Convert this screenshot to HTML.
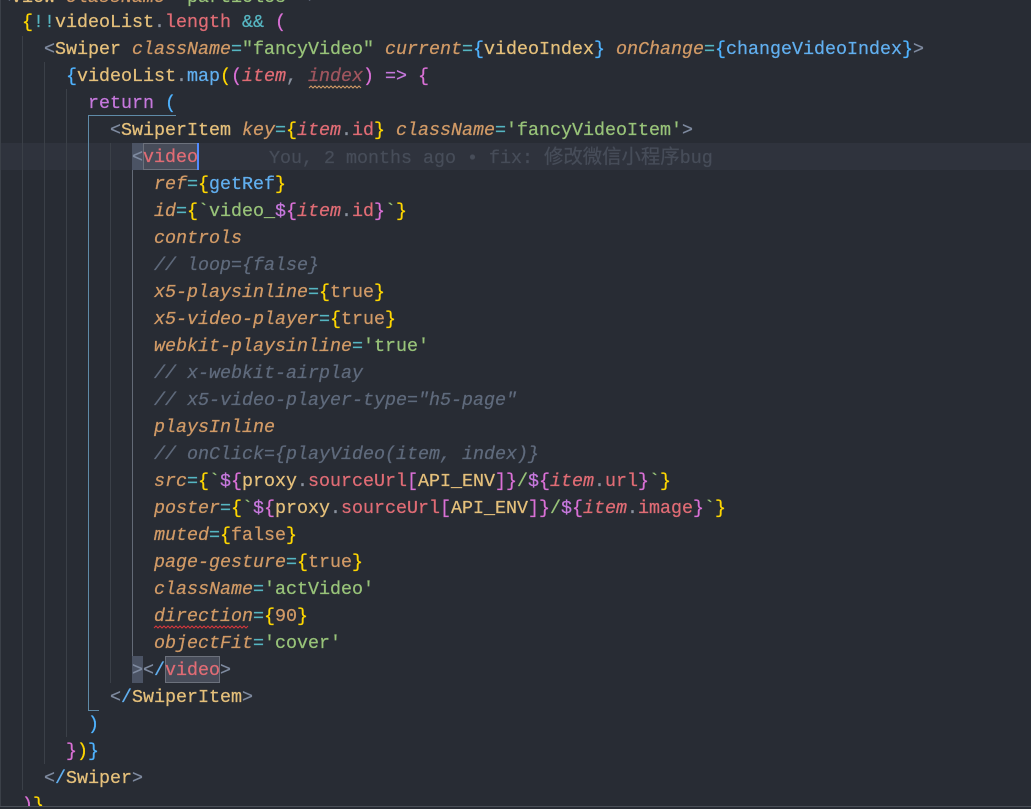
<!DOCTYPE html>
<html><head><meta charset="utf-8"><style>
html,body{margin:0;padding:0;background:#282c34;width:1031px;height:809px;overflow:hidden}
#e{position:relative;width:1031px;height:809px;overflow:hidden;background:#282c34;font-family:"Liberation Mono","Noto Sans CJK SC",monospace;font-size:18.33px;color:#abb2bf}
.l{position:absolute;left:0;height:27px;line-height:27px;white-space:pre;transform:translateY(1px);-webkit-text-stroke:.25px currentColor}
.b{position:absolute}
.a{color:#d19a66;font-style:italic}.t{color:#e5c07b}.g{color:#7f8ba0}.s{color:#98c379}.c{color:#5f6a7c;font-style:italic}
.r{color:#e06c75}.ri{color:#e06c75;font-style:italic}.u{color:#56b6c2}.p{color:#c678dd}.f{color:#61afef}.n{color:#d19a66}
.y{color:#ffd700}.k{color:#da70d6}.q{color:#4fb3ff}.d{color:#8a929f}.sl{color:#61afef}
</style></head><body><div id="e">
<div class="b" style="left:0;top:143px;width:1031px;height:27px;background:#2f333d"></div>
<div class="b" style="left:0;top:0;width:1px;height:806px;background:#3b4048"></div>
<div class="b" style="left:22px;top:36px;width:1px;height:754px;background:#3b4048"></div>
<div class="b" style="left:44px;top:62px;width:1px;height:702px;background:#3b4048"></div>
<div class="b" style="left:66px;top:89px;width:1px;height:648px;background:#3b4048"></div>
<div class="b" style="left:88px;top:115px;width:1px;height:595px;background:#5f8ba8"></div>
<div class="b" style="left:88px;top:115px;width:88px;height:1px;background:#5f8ba8"></div>
<div class="b" style="left:88px;top:710px;width:11px;height:1px;background:#5f8ba8"></div>
<div class="b" style="left:110px;top:143px;width:1px;height:540px;background:#3b4048"></div>
<div class="b" style="left:132px;top:170px;width:1px;height:486px;background:#636a76"></div>
<div class="b" style="left:132px;top:143px;width:11px;height:27px;background:#4b5364"></div>
<div class="b" style="left:143px;top:143px;width:53px;height:25px;background:#474c59;border:1px solid #6c717c"></div>
<div class="b" style="left:197px;top:143px;width:2px;height:27px;background:#528bff"></div>
<div class="b" style="left:132px;top:656px;width:11px;height:27px;background:#4b5364"></div>
<div class="b" style="left:165px;top:656px;width:53px;height:25px;background:#474c59;border:1px solid #6c717c"></div>
<div class="l" style="top:-17px"><span class="g">&lt;</span><span class="t">View</span> <span class="a">className</span><span class="u">=</span><span class="s">"particles"</span> <span class="g">&gt;</span></div>
<div class="l" style="top:8px">  <span class="y">{</span><span class="u">!!</span><span class="t">videoList</span><span class="d">.</span><span class="r">length</span> <span class="u">&amp;&amp;</span> <span class="k">(</span></div>
<div class="l" style="top:35px">    <span class="g">&lt;</span><span class="t">Swiper</span> <span class="a">className</span><span class="u">=</span><span class="s">"fancyVideo"</span> <span class="a">current</span><span class="u">=</span><span class="q">{</span><span class="t">videoIndex</span><span class="q">}</span> <span class="a">onChange</span><span class="u">=</span><span class="q">{</span><span class="f">changeVideoIndex</span><span class="q">}</span><span class="g">&gt;</span></div>
<div class="l" style="top:62px">      <span class="q">{</span><span class="t">videoList</span><span class="d">.</span><span class="f">map</span><span class="y">(</span><span class="k">(</span><span class="ri">item</span><span class="d">,</span> <span class="ri" style="opacity:.65">index</span><span class="k">)</span> <span class="p">=&gt;</span> <span class="k">{</span></div>
<div class="l" style="top:89px">        <span class="p">return</span> <span class="q">(</span></div>
<div class="l" style="top:116px">          <span class="g">&lt;</span><span class="t">SwiperItem</span> <span class="a">key</span><span class="u">=</span><span class="y">{</span><span class="ri">item</span><span class="d">.</span><span class="r">id</span><span class="y">}</span> <span class="a">className</span><span class="u">=</span><span class="s">'fancyVideoItem'</span><span class="g">&gt;</span></div>
<div class="l" style="top:143px">            <span class="g">&lt;</span><span class="r">video</span></div>
<div class="l" style="top:144px;left:269px;color:#474d59">You, 2 months ago • fix: <span style="font-size:19.4px">修改微信小程序</span>bug</div>
<div class="l" style="top:170px">              <span class="a">ref</span><span class="u">=</span><span class="y">{</span><span class="f">getRef</span><span class="y">}</span></div>
<div class="l" style="top:197px">              <span class="a">id</span><span class="u">=</span><span class="y">{</span><span class="s">`video_</span><span class="p">$</span><span class="k">{</span><span class="ri">item</span><span class="d">.</span><span class="r">id</span><span class="k">}</span><span class="s">`</span><span class="y">}</span></div>
<div class="l" style="top:224px">              <span class="a">controls</span></div>
<div class="l" style="top:251px">              <span class="c">// loop={false}</span></div>
<div class="l" style="top:278px">              <span class="a">x5-playsinline</span><span class="u">=</span><span class="y">{</span><span class="n">true</span><span class="y">}</span></div>
<div class="l" style="top:305px">              <span class="a">x5-video-player</span><span class="u">=</span><span class="y">{</span><span class="n">true</span><span class="y">}</span></div>
<div class="l" style="top:332px">              <span class="a">webkit-playsinline</span><span class="u">=</span><span class="s">'true'</span></div>
<div class="l" style="top:359px">              <span class="c">// x-webkit-airplay</span></div>
<div class="l" style="top:386px">              <span class="c">// x5-video-player-type="h5-page"</span></div>
<div class="l" style="top:413px">              <span class="a">playsInline</span></div>
<div class="l" style="top:440px">              <span class="c">// onClick={playVideo(item, index)}</span></div>
<div class="l" style="top:467px">              <span class="a">src</span><span class="u">=</span><span class="y">{</span><span class="s">`</span><span class="p">$</span><span class="k">{</span><span class="t">proxy</span><span class="d">.</span><span class="r">sourceUrl</span><span class="k">[</span><span class="t">API_ENV</span><span class="k">]</span><span class="k">}</span><span class="s">/</span><span class="p">$</span><span class="k">{</span><span class="ri">item</span><span class="d">.</span><span class="r">url</span><span class="k">}</span><span class="s">`</span><span class="y">}</span></div>
<div class="l" style="top:494px">              <span class="a">poster</span><span class="u">=</span><span class="y">{</span><span class="s">`</span><span class="p">$</span><span class="k">{</span><span class="t">proxy</span><span class="d">.</span><span class="r">sourceUrl</span><span class="k">[</span><span class="t">API_ENV</span><span class="k">]</span><span class="k">}</span><span class="s">/</span><span class="p">$</span><span class="k">{</span><span class="ri">item</span><span class="d">.</span><span class="r">image</span><span class="k">}</span><span class="s">`</span><span class="y">}</span></div>
<div class="l" style="top:521px">              <span class="a">muted</span><span class="u">=</span><span class="y">{</span><span class="n">false</span><span class="y">}</span></div>
<div class="l" style="top:548px">              <span class="a">page-gesture</span><span class="u">=</span><span class="y">{</span><span class="n">true</span><span class="y">}</span></div>
<div class="l" style="top:575px">              <span class="a">className</span><span class="u">=</span><span class="s">'actVideo'</span></div>
<div class="l" style="top:602px">              <span class="a">direction</span><span class="u">=</span><span class="y">{</span><span class="n">90</span><span class="y">}</span></div>
<div class="l" style="top:629px">              <span class="a">objectFit</span><span class="u">=</span><span class="s">'cover'</span></div>
<div class="l" style="top:656px">            <span class="g">&gt;</span><span class="g">&lt;</span><span class="sl">/</span><span class="r">video</span><span class="g">&gt;</span></div>
<div class="l" style="top:683px">          <span class="g">&lt;</span><span class="sl">/</span><span class="t">SwiperItem</span><span class="g">&gt;</span></div>
<div class="l" style="top:710px">        <span class="q">)</span></div>
<div class="l" style="top:737px">      <span class="k">}</span><span class="y">)</span><span class="q">}</span></div>
<div class="l" style="top:764px">    <span class="g">&lt;</span><span class="sl">/</span><span class="t">Swiper</span><span class="g">&gt;</span></div>
<div class="l" style="top:791px">  <span class="k">)</span><span class="y">}</span></div>
<svg class="b" style="left:0;top:0" width="1031" height="809" fill="none">
<path d="M309 88l2-2 2 2 2-2 2 2 2-2 2 2 2-2 2 2 2-2 2 2 2-2 2 2 2-2 2 2 2-2 2 2 2-2 2 2 2-2 2 2 2-2 2 2 2-2 2 2 2-2 2 2" stroke="#d19a66" stroke-width="1"/>
<path d="M154 628l2-2 2 2 2-2 2 2 2-2 2 2 2-2 2 2 2-2 2 2 2-2 2 2 2-2 2 2 2-2 2 2 2-2 2 2 2-2 2 2 2-2 2 2 2-2 2 2 2-2 2 2 2-2 2 2 2-2 2 2 2-2 2 2 2-2 2 2 2-2 2 2 2-2 2 2 2-2 2 2 2-2 2 2 2-2 2 2 2-2 2 2 2-2" stroke="#d5383c" stroke-width="1"/>
</svg>
<div class="b" style="left:0;top:806px;width:1031px;height:3px;background:#282c34;border-top:1px solid #4b5058;box-sizing:border-box"></div>
</div></body></html>
